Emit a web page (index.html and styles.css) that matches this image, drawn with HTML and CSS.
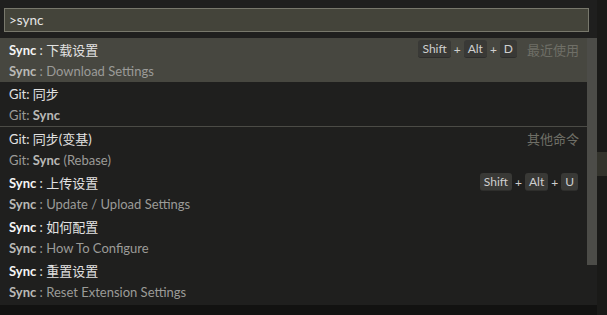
FILE: index.html
```html
<!DOCTYPE html>
<html lang="zh">
<head>
  <meta charset="UTF-8" />
  <title>Command Palette</title>
  <link rel="stylesheet" href="styles.css">
</head>
<body>
  <div class="stage">
    <div class="palette">
      <div class="buscar">
        <div class="entrada">&gt;sync</div>
      </div>
      <div class="lista">
        <div class="filas">
          <div class="fila activa">
            <div class="linea">
              <span class="titulo"><b>Sync</b> : 下载设置</span>
              <span class="teclas"><kbd>Shift</kbd>+<kbd>Alt</kbd>+<kbd>D</kbd></span>
              <span class="grupo">最近使用</span>
            </div>
            <div class="sub"><b>Sync</b> : Download Settings</div>
          </div>
          <div class="fila">
            <div class="linea"><span class="titulo">Git: 同步</span></div>
            <div class="sub">Git: <b>Sync</b></div>
          </div>
          <div class="fila separada">
            <div class="linea">
              <span class="titulo">Git: 同步(变基)</span>
              <span class="grupo">其他命令</span>
            </div>
            <div class="sub">Git: <b>Sync</b> (Rebase)</div>
          </div>
          <div class="fila">
            <div class="linea">
              <span class="titulo"><b>Sync</b> : 上传设置</span>
              <span class="teclas"><kbd>Shift</kbd>+<kbd>Alt</kbd>+<kbd>U</kbd></span>
            </div>
            <div class="sub"><b>Sync</b> : Update / Upload Settings</div>
          </div>
          <div class="fila">
            <div class="linea"><span class="titulo"><b>Sync</b> : 如何配置</span></div>
            <div class="sub"><b>Sync</b> : How To Configure</div>
          </div>
          <div class="fila">
            <div class="linea"><span class="titulo"><b>Sync</b> : 重置设置</span></div>
            <div class="sub"><b>Sync</b> : Reset Extension Settings</div>
          </div>
        </div>
        <div class="barra"><div class="pulgar"></div></div>
      </div>
    </div>
    <div class="borde">
      <div class="franja"></div>
    </div>
  </div>
</body>
</html>
```

FILE: styles.css
```css
body {
  margin: 0;
  background: #121211;
  font-family: Lato, "Noto Sans CJK SC", sans-serif;
  font-size: 13px;
  color: #d4d4d4;
  overflow: hidden;
}
.stage {
  display: flex;
  height: 315px;
}
.palette {
  width: 597px;
  height: 305px;
  background: #1f1f1e;
  display: flex;
  flex-direction: column;
}
.buscar {
  padding: 8px 8px 6px 4px;
}
.entrada {
  height: 22px;
  line-height: 22px;
  border: 1px solid #78786c;
  background: #44443a;
  color: #e6e6e6;
  padding-left: 4px;
  font-size: 13.5px;
}
.lista {
  display: flex;
  flex: 1;
}
.filas {
  flex: 1;
}
.fila {
  height: 44px;
  padding: 0 8px 0 9px;
}
.fila.activa {
  background: #474740;
}
.fila.separada {
  border-top: 1px solid #4b4b46;
}
.linea {
  height: 22px;
  display: flex;
  align-items: center;
  white-space: nowrap;
}
.titulo {
  flex: 1;
  color: #e2e2e2;
}
.titulo b {
  color: #f4f4f4;
}
.sub {
  height: 22px;
  line-height: 22px;
  white-space: nowrap;
  color: #9b9b98;
}
.sub b {
  color: #b9b9b6;
}
.teclas {
  display: flex;
  align-items: center;
  gap: 3px;
  color: #cfcfcf;
  font-size: 12px;
  margin-right: 1px;
}
kbd {
  font-family: inherit;
  font-size: 12px;
  background: #393936;
  border-bottom: 1px solid #2e2e2c;
  border-radius: 3px;
  padding: 0 4px;
  line-height: 17px;
}
.grupo {
  color: #6f6f67;
  margin-left: 9px;
}
.barra {
  width: 10px;
  height: 227px;
  background: #3a3a36;
}
.pulgar {
  height: 227px;
  background: #4c4c48;
}
.borde {
  flex: 1;
  background: #1a1a18;
  padding-top: 152px;
}
.franja {
  height: 24px;
  background: #33332c;
}
```
